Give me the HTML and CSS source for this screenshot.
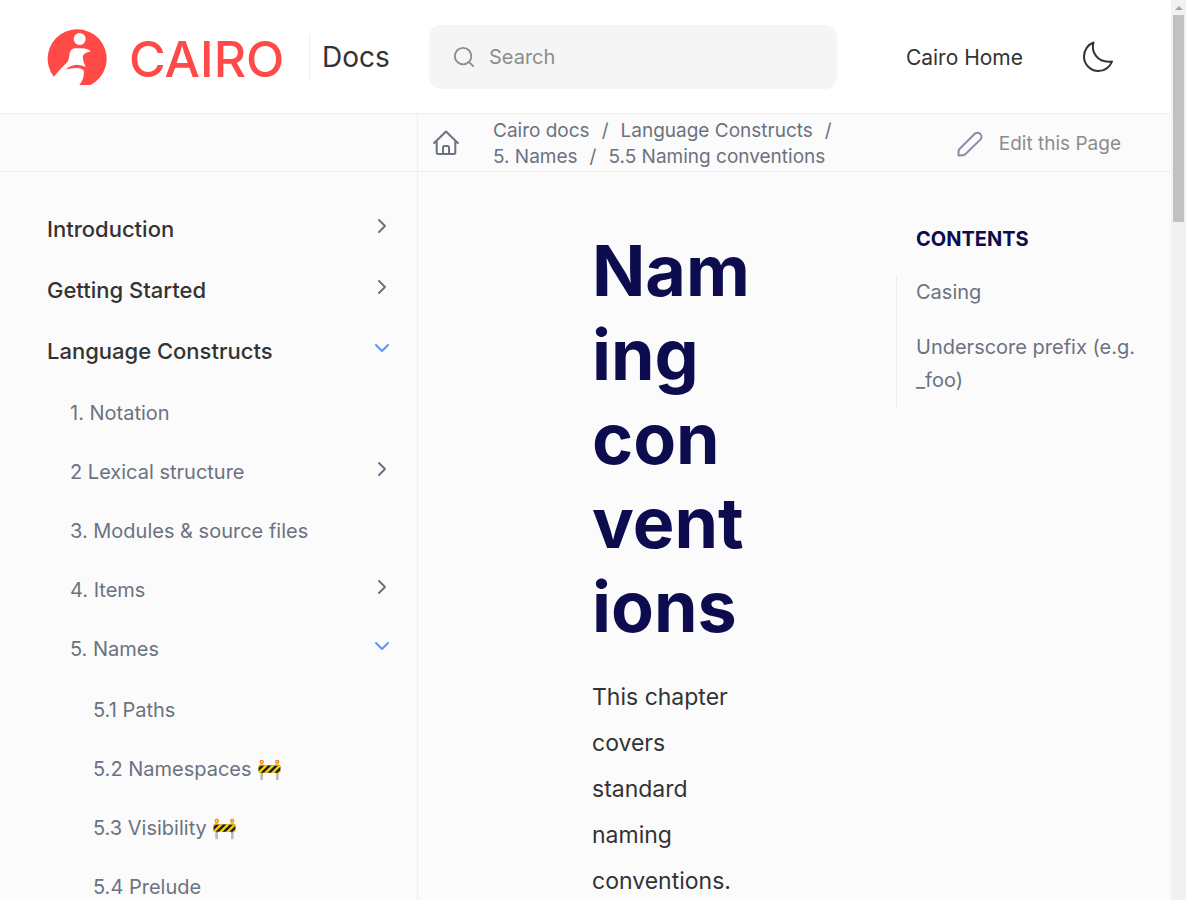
FILE: index.html
```html
<!DOCTYPE html>
<html lang="en">
<head>
<meta charset="utf-8">
<title>Naming conventions - Cairo Docs</title>
<meta name="viewport" content="width=device-width, initial-scale=1">
<link rel="stylesheet" href="styles.css">
</head>
<body>
<svg class="sprite" aria-hidden="true">
  <symbol id="chevron" viewBox="0 0 16 16"><path d="M5 2l6 6-6 6" fill="none" stroke="currentColor" stroke-width="2" stroke-linecap="round" stroke-linejoin="round"/></symbol>
</svg>
<div class="window">
<div class="page">
  <header class="header">
    <div class="brand">
      <a class="logo" href="#" aria-label="Cairo">
        <svg class="logo-mark" viewBox="0 0 60 58" aria-hidden="true">
          <path fill="#ff4a48" d="M6.800 48.700A29.500 29.500 0 1 1 43.500 57H32.300Q37.500 51 36.800 43Q35.500 40 29 40Q24 40 19 41.500Q23 37.300 30 36.800Q35 37 38.700 39Q35.300 33 36 28Q36.500 24.500 43.700 23.500Q41 20.300 34 20.300H28Q23 21 22.500 26Q22 32.500 19.500 35Q13 41 6.800 48.700Z"/>
          <circle cx="32.700" cy="11" r="6" fill="#fff"/>
        </svg>
        <span class="logo-text">CAIRO</span>
      </a>
      <a class="docs" href="#">Docs</a>
    </div>
    <label class="search">
      <svg viewBox="0 0 24 24" aria-hidden="true"><circle cx="11" cy="11" r="9"/><path d="M17.500 17.500l4.500 4.500"/></svg>
      <input type="search" placeholder="Search" aria-label="Search">
    </label>
    <nav class="header-links">
      <a href="#">Cairo Home</a>
      <button class="theme" type="button" aria-label="Toggle theme">
        <svg viewBox="0 0 32 32" aria-hidden="true"><path d="M11.500 1.500C9 10 14.500 22.500 30 20.500C28 26 22.500 30 16.500 30C8.500 30 2 23.500 2 15.500C2 9 6 3.500 11.500 1.500Z"/></svg>
      </button>
    </nav>
  </header>

  <div class="toolbar">
    <div class="toolbar-side"></div>
    <div class="toolbar-main">
      <a class="home" href="#" aria-label="Home">
        <svg viewBox="0 0 26 26" aria-hidden="true"><path d="M1.200 13L13 1.500L24.800 13M3.700 11V22.500a1.500 1.500 0 0 0 1.500 1.500H20.800a1.500 1.500 0 0 0 1.500-1.500V11M10 24V17.500a1.500 1.500 0 0 1 1.500-1.500h3a1.500 1.500 0 0 1 1.500 1.500V24"/></svg>
      </a>
      <nav aria-label="Breadcrumbs">
        <ul class="crumbs">
          <li><a href="#">Cairo docs</a></li>
          <li><a href="#">Language Constructs</a></li>
          <li><a href="#">5. Names</a></li>
          <li><a href="#">5.5 Naming conventions</a></li>
        </ul>
      </nav>
      <a class="edit" href="#">
        <svg viewBox="0 0 26 26" aria-hidden="true"><path d="M2 18.500L17.500 3a4 4 0 0 1 5.800 5.600L8 23.500Q5 24.800 1.500 24.500Q1.200 21 2 18.500Z"/></svg>
        Edit this Page
      </a>
    </div>
  </div>

  <div class="body">
    <nav class="sidebar" aria-label="Documentation">
      <ul class="level-1">
        <li><div class="row"><a href="#">Introduction</a><button type="button" aria-label="Expand Introduction"><svg><use href="#chevron"/></svg></button></div></li>
        <li><div class="row"><a href="#">Getting Started</a><button type="button" aria-label="Expand Getting Started"><svg><use href="#chevron"/></svg></button></div></li>
        <li><div class="row"><a href="#">Language Constructs</a><button class="open" type="button" aria-label="Collapse Language Constructs"><svg><use href="#chevron"/></svg></button></div>
          <ul class="level-2">
            <li><div class="row"><a href="#">1. Notation</a></div></li>
            <li><div class="row"><a href="#">2 Lexical structure</a><button type="button" aria-label="Expand Lexical structure"><svg><use href="#chevron"/></svg></button></div></li>
            <li><div class="row"><a href="#">3. Modules &amp; source files</a></div></li>
            <li><div class="row"><a href="#">4. Items</a><button type="button" aria-label="Expand Items"><svg><use href="#chevron"/></svg></button></div></li>
            <li><div class="row"><a href="#">5. Names</a><button class="open" type="button" aria-label="Collapse Names"><svg><use href="#chevron"/></svg></button></div>
              <ul class="level-3">
                <li><div class="row"><a href="#">5.1 Paths</a></div></li>
                <li><div class="row"><a href="#">5.2 Namespaces 🚧</a></div></li>
                <li><div class="row"><a href="#">5.3 Visibility 🚧</a></div></li>
                <li><div class="row"><a href="#">5.4 Prelude</a></div></li>
              </ul>
            </li>
          </ul>
        </li>
      </ul>
    </nav>
    <main class="content">
      <article class="article">
        <h1>Naming conventions</h1>
        <p>This chapter covers standard naming conventions.</p>
      </article>
      <aside class="toc">
        <h2>Contents</h2>
        <ul>
          <li><a href="#">Casing</a></li>
          <li><a href="#">Underscore prefix (e.g. _foo)</a></li>
        </ul>
      </aside>
    </main>
  </div>
</div>
<div class="scrollbar" aria-hidden="true"><span class="scroll-up"></span><span class="scroll-thumb"></span></div>
</div>
</body>
</html>
```
FILE: styles.css
```css
* { box-sizing: border-box; }
body {
  margin: 0;
  background: #fbfbfb;
  color: #333;
  font-family: Inter, "Liberation Sans", sans-serif;
  font-size: 20px;
}
a { color: inherit; text-decoration: none; }
ul { list-style: none; margin: 0; padding: 0; }
button { border: 0; padding: 0; background: none; color: inherit; cursor: pointer; }
svg { display: block; flex: none; }
.sprite { display: none; }

.window { display: flex; height: 100vh; overflow: hidden; }
.page { flex: 1; min-width: 0; display: flex; flex-direction: column; }

.header {
  flex: none;
  display: flex;
  align-items: center;
  background: #fff;
  border-bottom: 1px solid #eee;
  padding: 25px 57px 24px 47px;
}
.brand { display: flex; align-items: center; width: 382px; flex: none; }
.logo { display: flex; align-items: center; gap: 22px; color: #ff4a48; width: 262px; }
.logo-mark { width: 60px; height: 58px; }
.logo-text { padding-top: 4px; font-size: 50px; line-height: 54px; font-weight: 500; }
.docs {
  border-left: 1px solid #eee;
  padding-left: 12px;
  font-size: 28px;
  line-height: 46px;
}
.search {
  display: flex;
  align-items: center;
  gap: 14px;
  width: 408px;
  height: 64px;
  padding: 0 24px;
  border-radius: 12px;
  background: #f5f5f5;
}
.search svg { width: 22px; height: 22px; fill: none; stroke: #8c8c8c; stroke-width: 2; stroke-linecap: round; }
.search input {
  flex: 1;
  min-width: 0;
  border: 0;
  padding: 0;
  outline: 0;
  background: none;
  font: inherit;
}
.search input::placeholder { color: #8c8c8c; opacity: 1; }
.header-links { display: flex; align-items: center; justify-content: flex-end; gap: 59px; margin-left: auto; font-size: 21px; }
.theme svg { width: 32px; height: 32px; fill: none; stroke: #333; stroke-width: 2; stroke-linejoin: round; }

.toolbar { flex: none; display: flex; height: 58px; border-bottom: 1px solid #eee; color: #6b7280; }
.toolbar-side { width: 418px; flex: none; border-right: 1px solid #eee; }
.toolbar-main { flex: 1; min-width: 0; display: flex; align-items: center; padding: 2px 50px 0 15px; font-size: 19px; }
.home { margin: 0 34px 2px 0; }
.home svg { width: 26px; height: 26px; fill: none; stroke: currentColor; stroke-width: 2; stroke-linecap: round; stroke-linejoin: round; }
.crumbs { display: flex; flex-wrap: wrap; width: 380px; line-height: 26px; }
.crumbs li:not(:last-child)::after { content: "/"; padding: 0 12px; }
.edit { display: flex; align-items: center; gap: 16px; margin-left: auto; color: #8c8c8c; }
.edit svg { width: 26px; height: 26px; fill: none; stroke: #8a8aab; stroke-width: 2; stroke-linejoin: round; }

.body { flex: 1; min-height: 0; display: flex; }
.sidebar { width: 418px; flex: none; border-right: 1px solid #eee; padding: 26px 27px 0 47px; overflow: hidden; color: #6b7280; }
.row { display: flex; align-items: center; justify-content: space-between; }
.row button { width: 16px; height: 16px; margin-bottom: 5px; }
.row svg { width: 16px; height: 16px; }
.row .open { color: #5c94ff; transform: rotate(90deg); }
.level-1 > li > .row { height: 61px; font-size: 22px; font-weight: 500; }
.level-1 > li > .row > a { color: #333; }
.level-2 { padding: 2px 0 0 23px; }
.level-2 .row { height: 59px; }
.level-3 { padding: 2px 0 0 23px; }

.content { flex: 1; min-width: 0; display: flex; justify-content: space-between; padding: 0 20px 0 174px; }
.article { flex: 1; min-width: 0; padding-top: 57px; margin-right: 146px; }
.article h1 {
  margin: 0 0 25px;
  color: #0c0c4f;
  font-size: 70px;
  line-height: 84px;
  font-weight: 700;
  overflow-wrap: anywhere;
}
.article p { margin: 0; font-size: 23px; line-height: 46px; }
.toc { width: 255px; flex: none; padding-top: 54px; color: #6b7280; line-height: 33px; }
.toc h2 { margin: 0 0 24px; padding-left: 20px; font-size: 20px; line-height: 26px; color: #0c0c4f; text-transform: uppercase; }
.toc ul { border-left: 1px solid #eee; padding: 0 0 11px 19px; display: flex; flex-direction: column; gap: 22px; }

.scrollbar { width: 15px; flex: none; background: #f1f1f1; display: flex; flex-direction: column; align-items: center; }
.scroll-up { width: 0; border: 4px solid transparent; border-top: 0; border-bottom-color: #a3a3a3; margin: 6px 0 5px; }
.scroll-thumb { width: 11px; height: 23vh; background: #c1c1c1; }
```
